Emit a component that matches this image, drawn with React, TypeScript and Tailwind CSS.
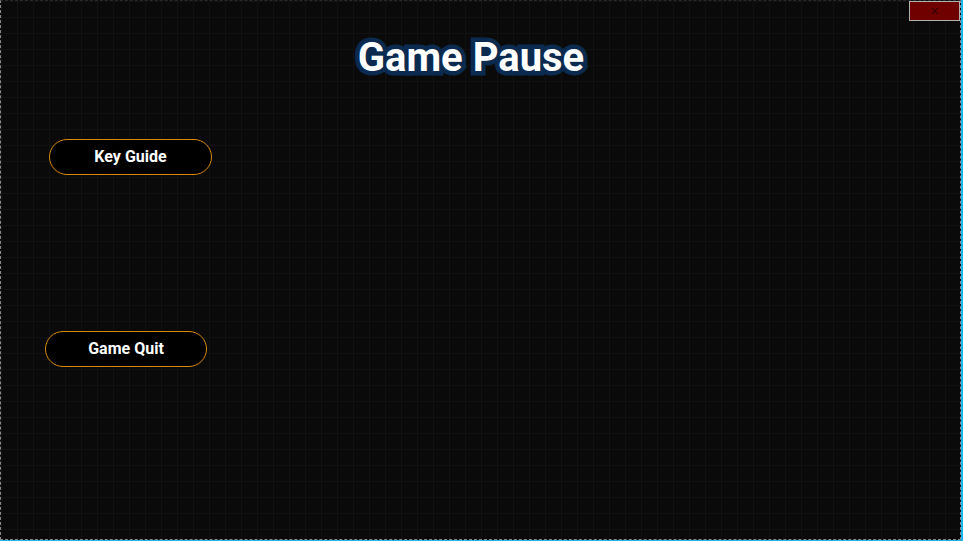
export default function App() {
  return (
    <div className="h-[541px] w-[963px] overflow-hidden border-r-2 border-b border-[#19b5f0] bg-[#0a0a0a] font-['Roboto',sans-serif]">
      <div className="relative flex h-full w-full flex-col border border-dashed border-t-solid border-t-[#2a2a2a] border-l-[#8a8a8a] border-r-[#8a8a8a] border-b-[#8a8a8a] bg-[linear-gradient(to_right,#111111_1px,transparent_1px),linear-gradient(to_bottom,#111111_1px,transparent_1px)] bg-size-[16px_16px]">
        <button className="absolute top-0 right-0 flex h-[20px] w-[51px] items-center justify-center border border-[#b0b0b0] bg-[#700000] text-[11px] leading-none text-[#3a0000]">
          ✕
        </button>

        <h1 className="mt-[32px] mr-[19px] text-center text-[40px] font-bold leading-[50px] text-white [-webkit-text-stroke:9px_#0a2a50] [paint-order:stroke_fill]">
          Game Pause
        </h1>

        <button className="mt-[56px] ml-[48px] h-[36px] w-[163px] rounded-full border border-[#d9890a] bg-black text-[16px] font-bold text-white">
          Key Guide
        </button>

        <button className="mt-[156px] ml-[44px] h-[36px] w-[162px] rounded-full border border-[#d9890a] bg-black text-[16px] font-bold text-white">
          Game Quit
        </button>
      </div>
    </div>
  );
}
